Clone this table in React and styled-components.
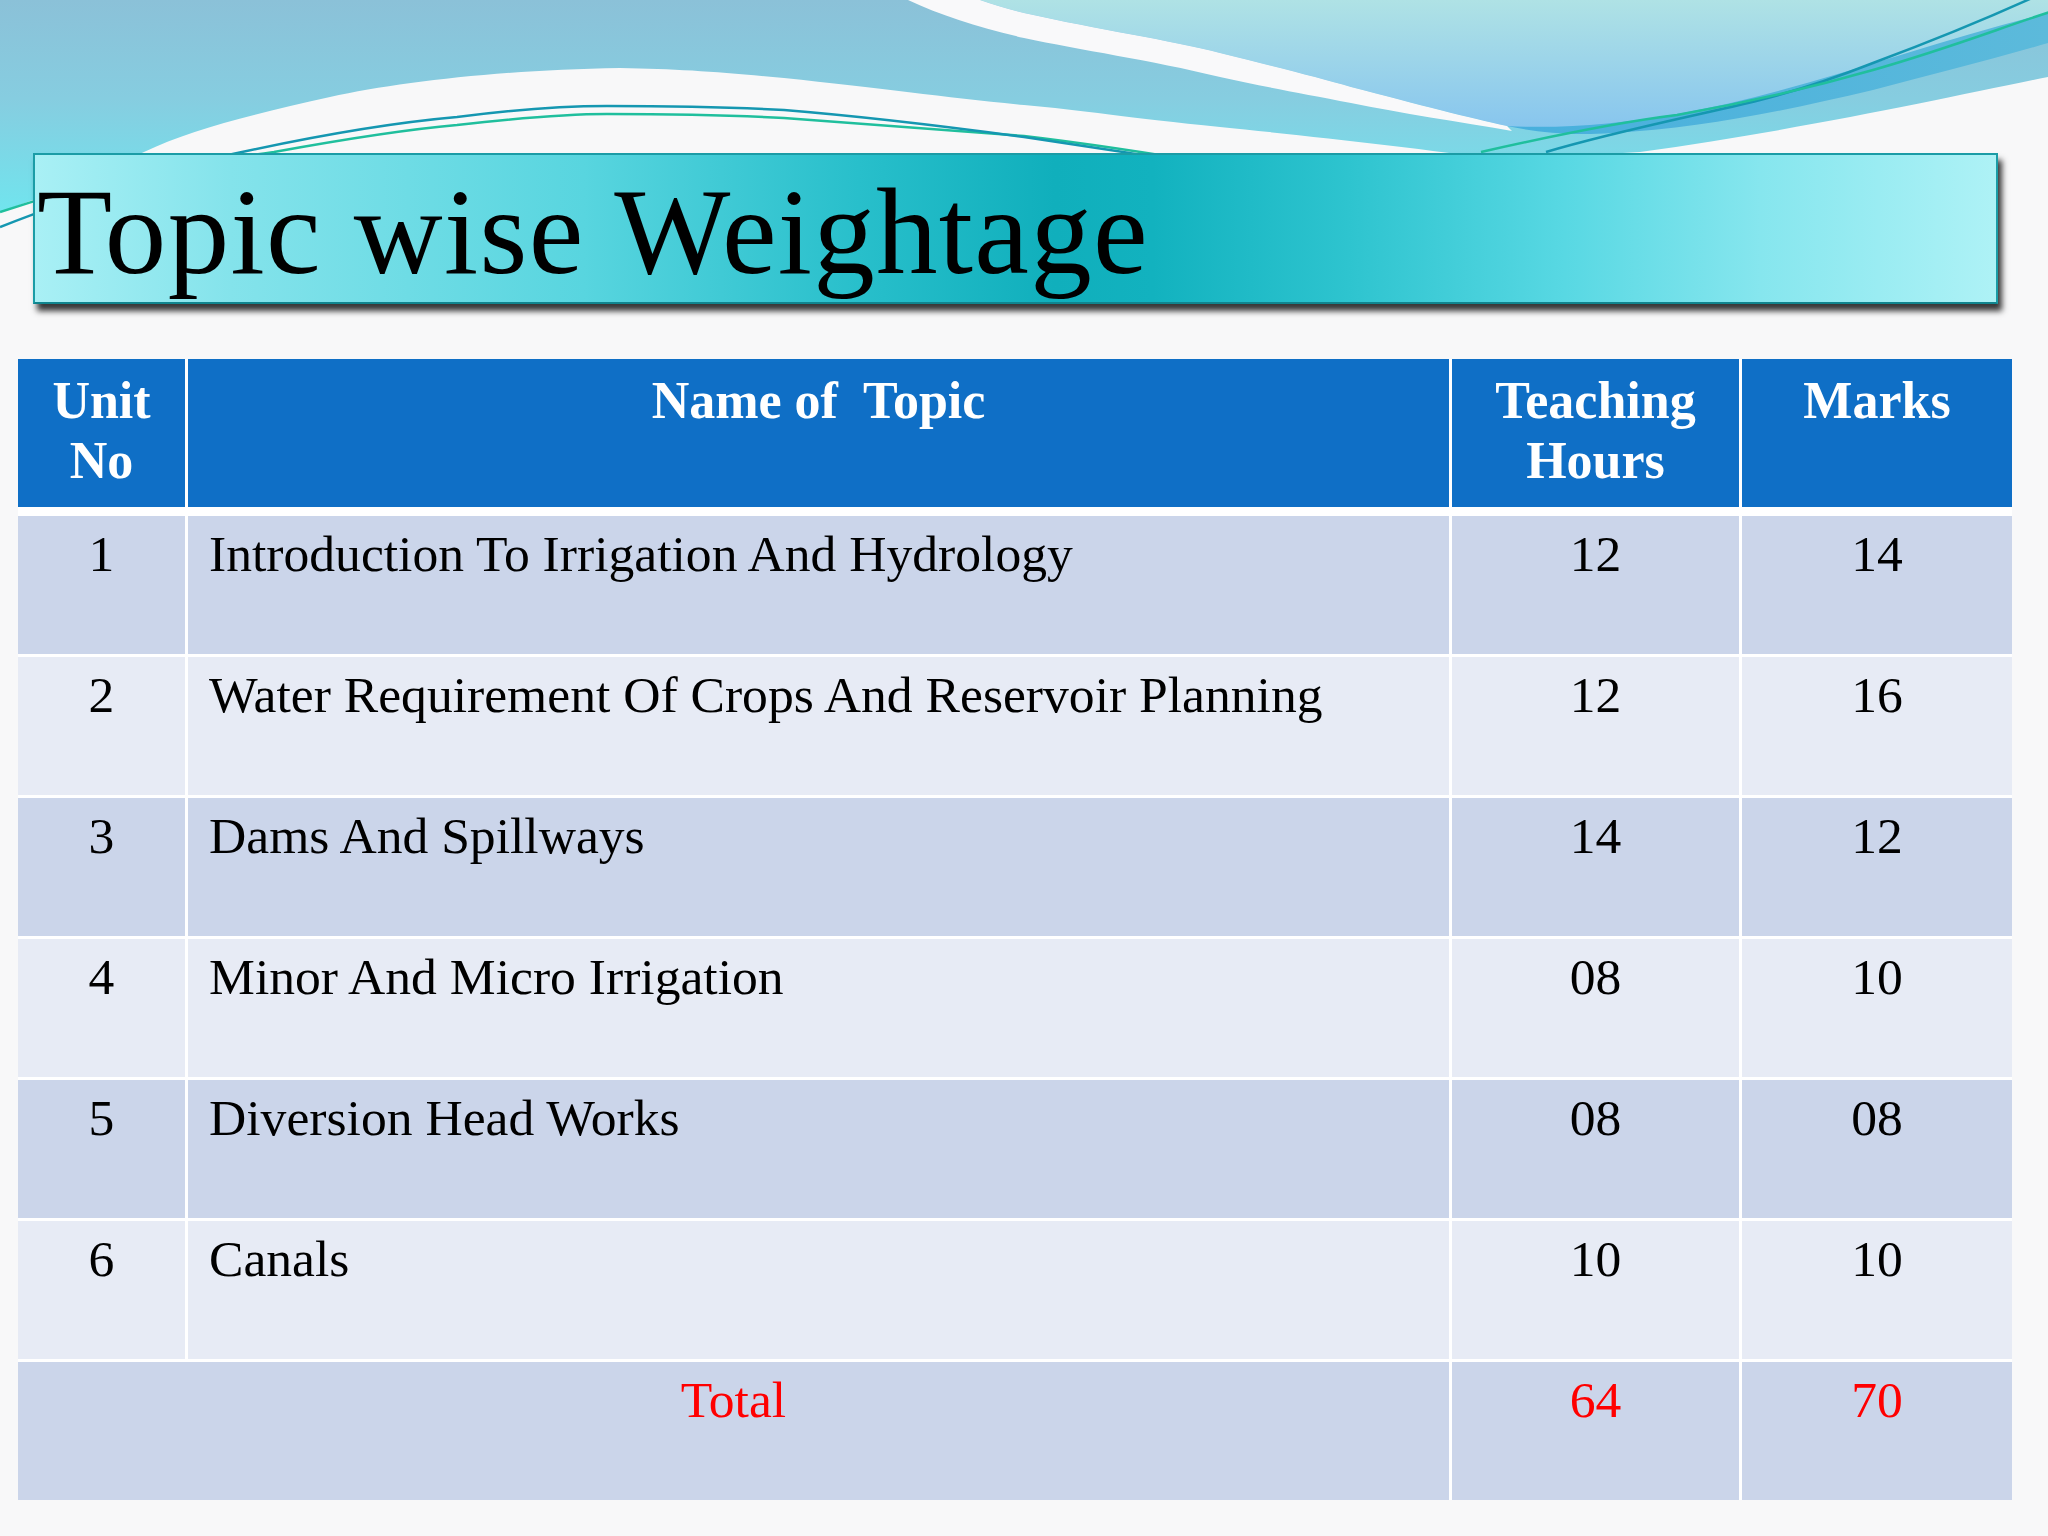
import React from "react";
import styled, { createGlobalStyle } from "styled-components";

const GlobalStyle = createGlobalStyle`
  html, body {
    margin: 0;
    padding: 0;
    background: #f8f8f9;
  }
`;

const Slide = styled.div`
  position: relative;
  width: 2048px;
  height: 1536px;
  overflow: hidden;
  box-sizing: border-box;
  padding-top: 153px;
  background: #f8f8f9;
  font-family: "Liberation Serif", "Times New Roman", serif;
`;

const Decor = styled.svg`
  position: absolute;
  left: 0;
  top: 0;
  z-index: 0;
`;

const TitleBar = styled.h1`
  position: relative;
  z-index: 1;
  box-sizing: border-box;
  width: 1965px;
  height: 151px;
  margin: 0 0 0 33px;
  padding: 15px 0 0 2px;
  border: 2px solid #1b9ca6;
  border-bottom-color: #10858e;
  background: linear-gradient(
    90deg,
    #a9f0f5 0%,
    #84e3eb 10%,
    #58d5df 28%,
    #28bfcb 42%,
    #10afbc 52%,
    #12b2bf 57%,
    #2ec4cf 67%,
    #58d8e3 78%,
    #86e6ee 88%,
    #aef2f6 100%
  );
  box-shadow: 4px 7px 6px rgba(0, 0, 0, 0.78);
  font-family: "Liberation Serif", "Times New Roman", serif;
  font-weight: normal;
  font-size: 123px;
  line-height: 123px;
  letter-spacing: 1.3px;
  color: #000;
  white-space: nowrap;
`;

const Table = styled.div`
  position: relative;
  z-index: 1;
  width: 1994px;
  margin: 55px 0 0 18px;
  display: flex;
  flex-direction: column;
  gap: 3px;
  background: #ffffff;
`;

const Row = styled.div`
  display: grid;
  grid-template-columns: 167px 1261px 287px 270px;
  column-gap: 3px;
  height: ${(p) => (p.$header ? "148px" : "138px")};
  margin-bottom: ${(p) => (p.$header ? "6px" : "0")};
`;

const HeadCell = styled.div`
  box-sizing: border-box;
  background: #0f6fc6;
  color: #ffffff;
  font-weight: bold;
  font-size: 52px;
  line-height: 60px;
  padding: 12px 6px 0;
  text-align: center;
  white-space: pre;
`;

const Cell = styled.div`
  box-sizing: border-box;
  grid-column: ${(p) => (p.$span ? `span ${p.$span}` : "auto")};
  background: ${(p) => (p.$dark ? "#cbd5ea" : "#e7ebf5")};
  color: ${(p) => (p.$red ? "#ff0000" : "#000000")};
  font-size: 51.6px;
  line-height: 60px;
  padding: 8px 21px 0;
  text-align: ${(p) => (p.$left ? "left" : "center")};
  white-space: nowrap;
`;

const rows = [
  ["1", "Introduction To Irrigation And Hydrology", "12", "14"],
  ["2", "Water Requirement Of Crops And Reservoir Planning", "12", "16"],
  ["3", "Dams And Spillways", "14", "12"],
  ["4", "Minor And Micro Irrigation", "08", "10"],
  ["5", "Diversion Head Works", "08", "08"],
  ["6", "Canals", "10", "10"],
];

const bandLeftEdge =
  "C995,5 1010,10 1024,13 C1100,30 1170,40 1220,53 C1280,68 1320,78 1351,87 C1420,105 1470,118 1507,126";

function Background() {
  return (
    <Decor width="2048" height="340" viewBox="0 0 2048 340">
      <defs>
        <linearGradient id="bigWave" x1="0" y1="0" x2="0" y2="220" gradientUnits="userSpaceOnUse">
          <stop offset="0" stopColor="#8bc1d8" />
          <stop offset="0.45" stopColor="#86cde0" />
          <stop offset="1" stopColor="#6fe6ef" />
        </linearGradient>
        <linearGradient id="bowl" x1="0" y1="0" x2="0" y2="130" gradientUnits="userSpaceOnUse">
          <stop offset="0" stopColor="#afe2e5" />
          <stop offset="1" stopColor="#87c5ee" />
        </linearGradient>
        <linearGradient id="stripe" x1="1500" y1="0" x2="2048" y2="0" gradientUnits="userSpaceOnUse">
          <stop offset="0" stopColor="#47afdd" />
          <stop offset="1" stopColor="#5cbadb" />
        </linearGradient>
      </defs>
      <path
        d="M0,0 L2048,0 L2048,77 C1950,97 1800,130 1640,152 L1500,160 C1420,148 1300,135 1220,127 C1130,118 1080,110 1024,105 C950,98 880,88 784,78 C720,72 680,69 620,68 C500,70 400,82 330,97 C250,115 190,130 144,152 C100,172 50,195 0,212 Z"
        fill="url(#bigWave)"
      />
      <path
        d={`M980,0 L2048,0 L2048,43 C1990,60 1930,75 1873,90 C1780,112 1700,128 1612,133 C1570,136 1535,132 1507,126 C1470,118 1420,105 1351,87 C1320,78 1280,68 1220,53 C1170,40 1100,30 1024,13 C1010,10 995,5 980,0 Z`}
        fill="url(#stripe)"
      />
      <path
        d={`M980,0 L2048,0 L2048,13 C1920,45 1800,92 1677,114 C1620,124 1560,129 1507,126 C1470,118 1420,105 1351,87 C1320,78 1280,68 1220,53 C1170,40 1100,30 1024,13 C1010,10 995,5 980,0 Z`}
        fill="url(#bowl)"
      />
      <path
        d={`M908,0 L980,0 ${bandLeftEdge} L1512,131 C1460,122 1400,113 1351,103 C1300,93 1260,86 1220,77 C1150,60 1080,50 1024,38 C980,28 940,15 908,0 Z`}
        fill="#f9f9fa"
      />
      <path
        d="M0,212 C90,182 180,165 274,152 C340,140 400,130 457,125 C510,119 560,114 607,114 C680,114 730,115 784,118 C870,124 950,131 1024,136 C1100,145 1150,153 1220,165"
        fill="none"
        stroke="#20bf9d"
        strokeWidth="2.5"
      />
      <path
        d="M0,227 C80,196 160,168 242,152 C330,133 400,122 457,117 C510,110 560,106 607,106 C680,106 730,107 784,110 C870,117 950,127 1024,137 C1100,148 1150,156 1220,168"
        fill="none"
        stroke="#1597b1"
        strokeWidth="2.5"
      />
      <path
        d="M1546,152 C1620,130 1700,115 1760,100 C1800,90 1840,76 1873,63 C1940,38 1990,17 2032,-2"
        fill="none"
        stroke="#1597b1"
        strokeWidth="2.5"
      />
      <path
        d="M1481,152 C1560,134 1620,122 1677,115 C1750,102 1810,88 1873,70 C1950,48 2000,28 2050,12"
        fill="none"
        stroke="#20bf9d"
        strokeWidth="2.5"
      />
    </Decor>
  );
}

export default function App() {
  return (
    <>
      <GlobalStyle />
      <Slide>
        <Background />
        <TitleBar>Topic wise Weightage</TitleBar>
        <Table>
          <Row $header>
            <HeadCell>{"Unit\nNo"}</HeadCell>
            <HeadCell>{"Name of  Topic"}</HeadCell>
            <HeadCell>{"Teaching\nHours"}</HeadCell>
            <HeadCell>{"Marks"}</HeadCell>
          </Row>
          {rows.map((r, i) => {
            const dark = i % 2 === 0;
            return (
              <Row key={r[0]}>
                <Cell $dark={dark}>{r[0]}</Cell>
                <Cell $dark={dark} $left>
                  {r[1]}
                </Cell>
                <Cell $dark={dark}>{r[2]}</Cell>
                <Cell $dark={dark}>{r[3]}</Cell>
              </Row>
            );
          })}
          <Row>
            <Cell $dark $red $span={2}>
              Total
            </Cell>
            <Cell $dark $red>
              64
            </Cell>
            <Cell $dark $red>
              70
            </Cell>
          </Row>
        </Table>
      </Slide>
    </>
  );
}
